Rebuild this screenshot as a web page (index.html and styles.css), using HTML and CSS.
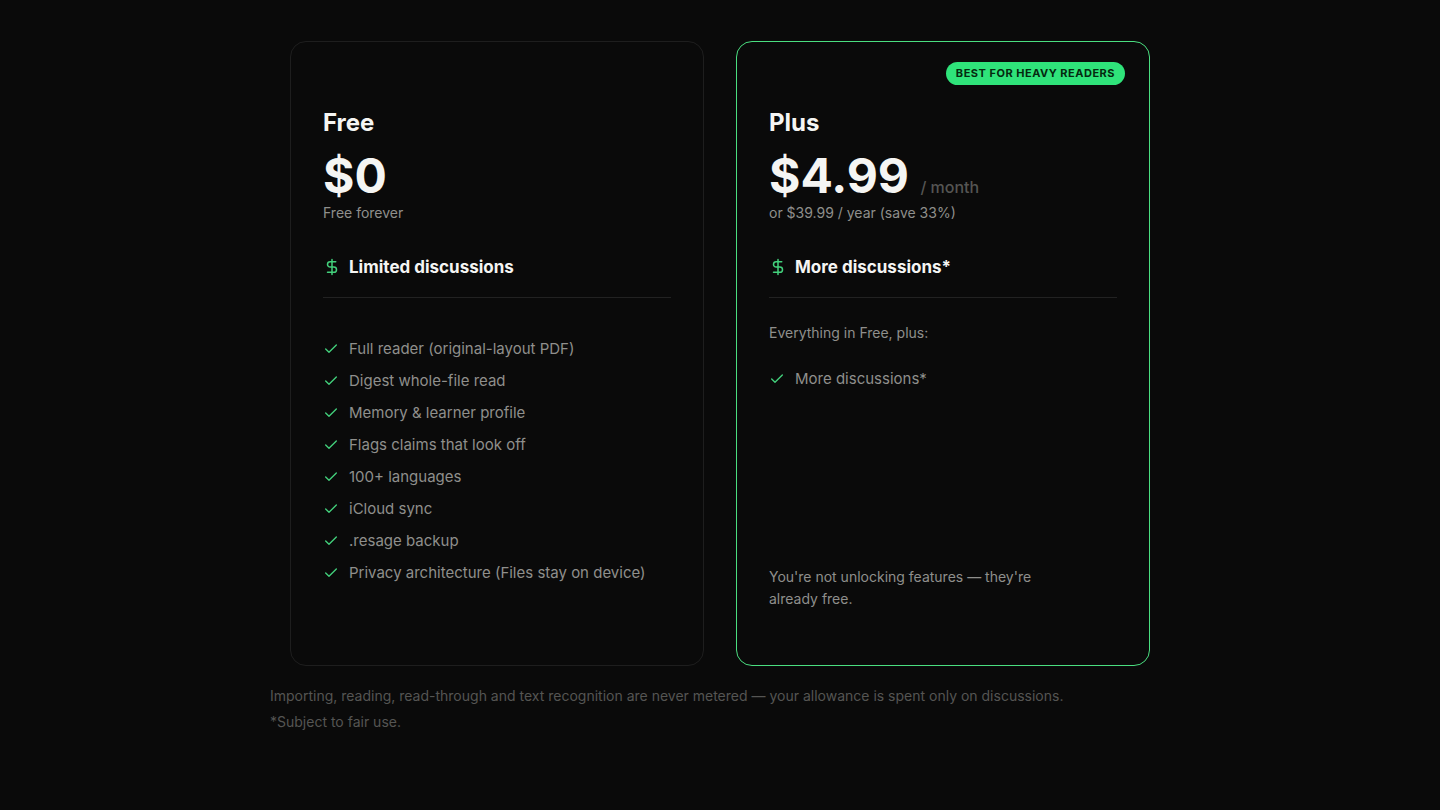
FILE: index.html
```html
<!DOCTYPE html>
<html lang="en">
<head>
<meta charset="utf-8">
<title>Pricing</title>
<link rel="stylesheet" href="styles.css">
</head>
<body>
<svg class="sprite" aria-hidden="true">
  <symbol id="check" viewBox="0 0 24 24"><path d="M20 6 9 17l-5-5"/></symbol>
  <symbol id="dollar" viewBox="0 0 24 24"><path d="M12 2v20M17 5H9.500a3.500 3.500 0 0 0 0 7h5a3.500 3.500 0 0 1 0 7H6"/></symbol>
</svg>
<main class="pricing">
  <div class="plans">
    <section class="plan">
      <h2 class="plan-name">Free</h2>
      <p class="price">$0</p>
      <p class="billing">Free forever</p>
      <h3 class="allowance"><svg class="icon icon-dollar"><use href="#dollar"/></svg>Limited discussions</h3>
      <ul class="features">
        <li><svg class="icon"><use href="#check"/></svg>Full reader (original-layout PDF)</li>
        <li><svg class="icon"><use href="#check"/></svg>Digest whole-file read</li>
        <li><svg class="icon"><use href="#check"/></svg>Memory &amp; learner profile</li>
        <li><svg class="icon"><use href="#check"/></svg>Flags claims that look off</li>
        <li><svg class="icon"><use href="#check"/></svg>100+ languages</li>
        <li><svg class="icon"><use href="#check"/></svg>iCloud sync</li>
        <li><svg class="icon"><use href="#check"/></svg>.resage backup</li>
        <li><svg class="icon"><use href="#check"/></svg>Privacy architecture (Files stay on device)</li>
      </ul>
    </section>
    <section class="plan plan-featured">
      <span class="badge">Best for heavy readers</span>
      <h2 class="plan-name">Plus</h2>
      <p class="price">$4.99 <span class="period">/ month</span></p>
      <p class="billing">or $39.99 / year (save 33%)</p>
      <h3 class="allowance"><svg class="icon icon-dollar"><use href="#dollar"/></svg>More discussions*</h3>
      <p class="intro">Everything in Free, plus:</p>
      <ul class="features features-plus">
        <li><svg class="icon"><use href="#check"/></svg>More discussions*</li>
      </ul>
      <p class="closing">You're not unlocking features — they're already free.</p>
    </section>
  </div>
  <footer class="notes">
    <p>Importing, reading, read-through and text recognition are never metered — your allowance is spent only on discussions.</p>
    <p>*Subject to fair use.</p>
  </footer>
</main>
</body>
</html>
```
FILE: styles.css
```css
* {
  box-sizing: border-box;
}

body {
  margin: 0;
  background: #0a0a0a;
  color: #f5f5f3;
  font-family: Inter, "Liberation Sans", sans-serif;
}

h2, h3, p, ul {
  margin: 0;
  padding: 0;
}

.sprite {
  position: absolute;
  width: 0;
  height: 0;
}

.pricing {
  max-width: 900px;
  margin: 0 auto;
  padding: 41px 0;
}

.plans {
  display: grid;
  grid-template-columns: 1fr 1fr;
  gap: 32px;
  padding: 0 20px;
}

.plan {
  position: relative;
  display: flex;
  flex-direction: column;
  padding: 64px 32px 55px;
  border: 1px solid #1e1e1e;
  border-radius: 16px;
}

.plan-featured {
  border-color: #4ade80;
}

.badge {
  position: absolute;
  top: 20px;
  right: 24px;
  padding: 4px 10px;
  border-radius: 12px;
  background: #2fe37a;
  color: #05290f;
  font-size: 11px;
  font-weight: 700;
  line-height: 15px;
  letter-spacing: 0.5px;
  text-transform: uppercase;
}

.plan-name {
  font-size: 24px;
  font-weight: 700;
  line-height: 34px;
}

.price {
  margin-top: 8px;
  font-size: 48px;
  font-weight: 700;
  line-height: 55px;
}

.period {
  color: #555553;
  font-size: 16px;
  font-weight: 500;
  line-height: 16px;
}

.billing {
  color: #8f8f8c;
  font-size: 14px;
  line-height: 20px;
}

.allowance {
  display: flex;
  align-items: center;
  gap: 8px;
  margin-top: 31px;
  padding-bottom: 17px;
  border-bottom: 1px solid #222;
  font-size: 17px;
  font-weight: 700;
  line-height: 26px;
}

.icon {
  flex: none;
  width: 16px;
  height: 16px;
  fill: none;
  stroke: #43d17c;
  stroke-width: 2;
  stroke-linecap: round;
  stroke-linejoin: round;
}

.icon-dollar {
  width: 18px;
  height: 18px;
}

.features {
  display: grid;
  gap: 8px;
  margin-top: 39px;
  padding-bottom: 25px;
  list-style: none;
  color: #8f8f8c;
  font-size: 15px;
  line-height: 24px;
}

.features li {
  display: flex;
  align-items: center;
  gap: 10px;
}

.intro, .closing {
  color: #8f8f8c;
  font-size: 14px;
  line-height: 22px;
}

.intro {
  margin-top: 24px;
}

.features-plus {
  margin-top: 23px;
}

.closing {
  max-width: 300px;
  margin-top: auto;
}

.notes {
  margin-top: 17px;
  color: #555553;
  font-size: 14px;
  line-height: 26px;
}
```
